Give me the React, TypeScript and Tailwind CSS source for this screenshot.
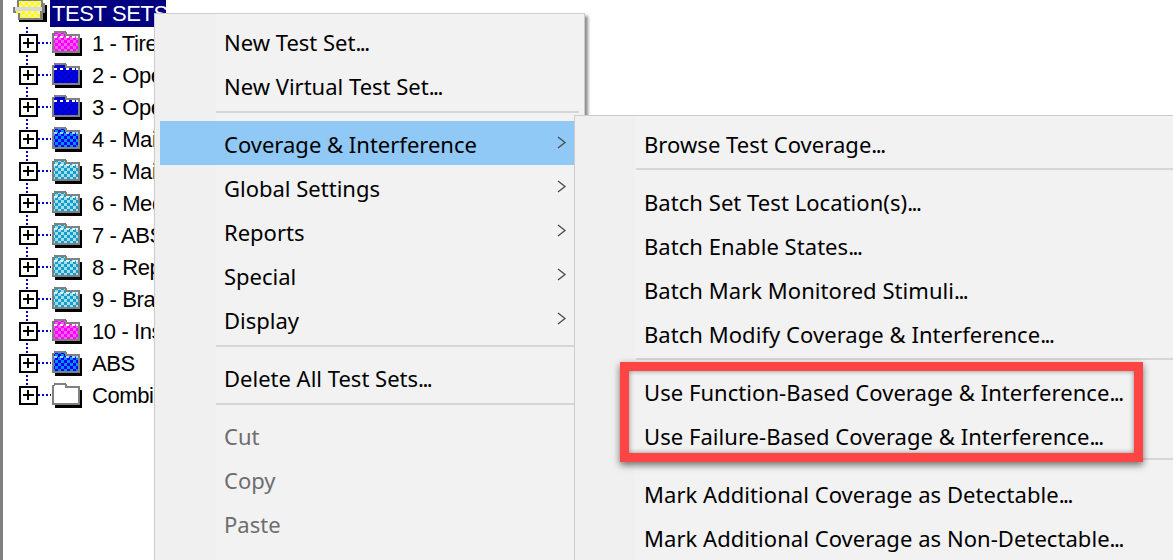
import React from 'react';

type Pal = { a: string; b: string; top: string };

const MAGENTA: Pal = { a: '#ff00ff', b: '#f060e8', top: '#ffffff' };
const NAVY: Pal = { a: '#0000c8', b: '#0000f0', top: '#ffffff' };
const BLUE: Pal = { a: '#0000ff', b: '#0090f0', top: '#a0d8ff' };
const TEAL: Pal = { a: '#10a0d0', b: '#a8dce8', top: '#e0f4f8' };
const WHITE: Pal = { a: '#ffffff', b: '#ffffff', top: '#ffffff' };

const TREE: { label: string; pal: Pal }[] = [
  { label: '1 - Tire', pal: MAGENTA },
  { label: '2 - Ope', pal: NAVY },
  { label: '3 - Ope', pal: NAVY },
  { label: '4 - Mai', pal: BLUE },
  { label: '5 - Mai', pal: TEAL },
  { label: '6 - Med', pal: TEAL },
  { label: '7 - ABS', pal: TEAL },
  { label: '8 - Rep', pal: TEAL },
  { label: '9 - Bra', pal: TEAL },
  { label: '10 - Ins', pal: MAGENTA },
  { label: 'ABS', pal: BLUE },
  { label: 'Combi', pal: WHITE },
];

function Folder({ pal, id }: { pal: Pal; id: string }) {
  return (
    <svg width="30" height="25" viewBox="0 0 30 25" shapeRendering="crispEdges" className="shrink-0">
      <defs>
        <pattern id={id} width="6" height="6" patternUnits="userSpaceOnUse">
          <rect width="6" height="6" fill={pal.a} />
          <rect width="3" height="3" fill={pal.b} />
          <rect x="3" y="3" width="3" height="3" fill={pal.b} />
        </pattern>
      </defs>
      <rect x="3" y="7" width="27" height="18" fill="#000" />
      <path d="M2 0 H14 V1 H15 V3 H28 V22 H0 V2 H2 Z" fill="#808080" />
      <path d="M3 2 H13 V5 H26 V20 H2 V3 H3 Z" fill={`url(#${id})`} />
      {pal !== WHITE && (
        <path d="M2 5 h3 v2 h-3 z M8 5 h3 v2 h-3 z M14 5 h3 v2 h-3 z M20 5 h3 v2 h-3 z M24 5 h2 v2 h-2 z" fill={pal.top} />
      )}
    </svg>
  );
}

function OpenFolder() {
  return (
    <svg width="34" height="26" viewBox="0 0 34 26" shapeRendering="crispEdges" className="shrink-0">
      <defs>
        <pattern id="openfill" width="6" height="6" patternUnits="userSpaceOnUse">
          <rect width="6" height="6" fill="#ffff00" />
          <rect width="3" height="3" fill="#f4f4b0" />
          <rect x="3" y="3" width="3" height="3" fill="#f4f4b0" />
        </pattern>
      </defs>
      <rect x="6" y="6" width="28" height="17" fill="#000" />
      <path d="M4 0 H30 V4 H32 V14 H30 V21 H5 V14 H0 V8 H4 Z" fill="#808080" />
      <path d="M6 2 H28 V8 H6 Z" fill="url(#openfill)" />
      <path d="M3 12 H27 V19 H7 V14 H3 Z" fill="url(#openfill)" />
      <rect x="2" y="8" width="27" height="4" fill="#d8d8d8" />
    </svg>
  );
}

function Expander({ last }: { last: boolean }) {
  return (
    <svg width="32" height="32" viewBox="0 0 32 32" shapeRendering="crispEdges" className="shrink-0">
      <path d={last ? 'M8 0 V8' : 'M8 0 V8 M8 24 V32'} stroke="#0000c0" strokeWidth="2" strokeDasharray="2 2" />
      <path d="M19 16 H32" stroke="#0000c0" strokeWidth="2" strokeDasharray="2 2" />
      <rect x="1" y="8" width="17" height="17" fill="#fff" stroke="#000" strokeWidth="2" />
      <path d="M4 16 H15 M9 11 V21" stroke="#000" strokeWidth="2" />
    </svg>
  );
}

function Chevron() {
  return (
    <svg width="10" height="14" viewBox="0 0 10 14" fill="none" className="absolute right-[12px] top-[15px]">
      <path d="M1 1 L8 6.5 L1 12" stroke="#4a4a4a" strokeWidth="1.3" />
    </svg>
  );
}

// the trailing dots sit tighter in the original font
function Label({ text }: { text: string }) {
  if (!text.endsWith('...')) return <span>{text}</span>;
  return (
    <span>
      {text.slice(0, -3)}
      <span className="tracking-[-1.5px]">...</span>
    </span>
  );
}

function Item({ label, sub, active, disabled }: { label: string; sub?: boolean; active?: boolean; disabled?: boolean }) {
  return (
    <div className={`relative flex h-[44px] items-center pl-[64px] pt-[2px] whitespace-nowrap ${active ? 'bg-[#90c8f6]' : ''} ${disabled ? 'text-[#6d6d6d]' : 'text-black'}`}>
      <Label text={label} />
      {sub && <Chevron />}
    </div>
  );
}

function Sep() {
  return <div className="mb-[8px] ml-[56px] mt-[4px] h-[2px] bg-[#d6d6d6]" />;
}

function SubItem({ label }: { label: string }) {
  return (
    <div className="flex h-[44px] items-center pl-[69px] whitespace-nowrap tracking-[0.05px] text-black">
      <Label text={label} />
    </div>
  );
}

function SubSep({ className }: { className: string }) {
  return <div className={`ml-[61px] h-[2px] bg-[#d6d6d6] ${className}`} />;
}

export default function App() {
  return (
    <div className="relative h-[560px] w-[1173px] overflow-hidden bg-white font-['Liberation_Sans',sans-serif]">
      {/* tree */}
      <div className="h-full w-full border-l-[3px] border-[#808080] pl-[10px] text-[22px] tracking-[-0.4px] text-black">
        <div className="flex h-[27px] items-start">
          <div className="-mt-[1px]"><OpenFolder /></div>
          <div className="ml-[3px] flex h-[27px] w-[116px] shrink-0 items-center whitespace-nowrap bg-[#000080] pl-[2px] text-white">TEST SETS</div>
        </div>
        {TREE.map((row, i) => (
          <div key={row.label} className="ml-[6px] flex h-[32px] items-center">
            <Expander last={i === TREE.length - 1} />
            <div className="ml-[1px]"><Folder pal={row.pal} id={`f${i}`} /></div>
            <span className="ml-[10px] whitespace-nowrap">{row.label}</span>
          </div>
        ))}
      </div>

      {/* context menu */}
      <div className="absolute left-[154px] top-[13px] h-[600px] w-[431px] border border-[#cccccc] bg-[linear-gradient(90deg,#f0f0f0_61px,#f2f2f2_61px)] px-[5px] pt-[5px] font-['Noto_Sans',sans-serif] text-[22px] shadow-[3px_3px_3px_rgba(0,0,0,0.45)]">
        <Item label="New Test Set..." />
        <Item label="New Virtual Test Set..." />
        <Sep />
        <Item label="Coverage & Interference" sub active />
        <Item label="Global Settings" sub />
        <Item label="Reports" sub />
        <Item label="Special" sub />
        <Item label="Display" sub />
        <Sep />
        <Item label="Delete All Test Sets..." />
        <Sep />
        <Item label="Cut" disabled />
        <Item label="Copy" disabled />
        <Item label="Paste" disabled />
        <Item label="Delete" disabled />
      </div>

      {/* submenu */}
      <div className="absolute left-[574px] top-[115px] h-[500px] w-[640px] border border-[#cccccc] bg-[linear-gradient(90deg,#f0f0f0_60px,#f2f2f2_60px)] pt-[6px] font-['Noto_Sans',sans-serif] text-[22px]">
        <SubItem label="Browse Test Coverage..." />
        <SubSep className="mb-[10px] mt-[2px]" />
        <SubItem label="Batch Set Test Location(s)..." />
        <SubItem label="Batch Enable States..." />
        <SubItem label="Batch Mark Monitored Stimuli..." />
        <SubItem label="Batch Modify Coverage & Interference..." />
        <SubSep className="mb-[10px] mt-[2px]" />
        <SubItem label="Use Function-Based Coverage & Interference..." />
        <SubItem label="Use Failure-Based Coverage & Interference..." />
        <SubSep className="mb-[12px] mt-[0px]" />
        <SubItem label="Mark Additional Coverage as Detectable..." />
        <SubItem label="Mark Additional Coverage as Non-Detectable..." />
      </div>

      {/* red callout */}
      <div className="absolute left-[620px] top-[362px] h-[100px] w-[523px] border-[9px] border-[#ff4444] shadow-[0_3px_7px_rgba(0,0,0,0.55),inset_0_0_5px_rgba(0,0,0,0.45)]" />
    </div>
  );
}
